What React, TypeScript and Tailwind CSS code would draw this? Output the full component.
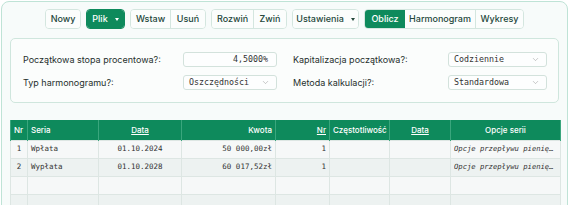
import { ChevronDown } from 'lucide-react';

const sans = { fontFamily: 'Inter, "Noto Sans", sans-serif' };
const mono = { fontFamily: '"DejaVu Sans Mono", "Liberation Mono", monospace' };

function Btn({ children, active, className = '' }: { children: React.ReactNode; active?: boolean; className?: string }) {
  return (
    <div
      className={`h-full flex items-center justify-center px-[7px] text-[9px] font-medium ${
        active ? 'bg-[#0e8a5c] text-white' : 'bg-[#fbfdfc] text-[#24473b]'
      } ${className}`}
    >
      {children}
    </div>
  );
}

function Caret({ light }: { light?: boolean }) {
  return (
    <span
      className={`ml-[7px] w-0 h-0 border-x-[2.5px] border-x-transparent border-t-[3px] ${
        light ? 'border-t-white' : 'border-t-[#24473b]'
      }`}
    />
  );
}

function Toolbar() {
  return (
    <div className="flex justify-center gap-[5px] h-[20px]" style={sans}>
      <div className="flex rounded-[4px] border border-[#d4e6df] overflow-hidden">
        <Btn className="w-[34px]">Nowy</Btn>
      </div>
      <div className="flex rounded-[4px] border border-[#0e8a5c] overflow-hidden">
        <Btn active className="w-[37px]">
          Plik
          <Caret light />
        </Btn>
      </div>
      <div className="flex rounded-[4px] border border-[#d4e6df] overflow-hidden">
        <Btn className="w-[40px] border-r border-[#d4e6df]">Wstaw</Btn>
        <Btn className="w-[34px]">Usuń</Btn>
      </div>
      <div className="flex rounded-[4px] border border-[#d4e6df] overflow-hidden">
        <Btn className="w-[42px] border-r border-[#d4e6df]">Rozwiń</Btn>
        <Btn className="w-[32px]">Zwiń</Btn>
      </div>
      <div className="flex rounded-[4px] border border-[#d4e6df] overflow-hidden">
        <Btn className="w-[65px]">
          Ustawienia
          <Caret />
        </Btn>
      </div>
      <div className="flex rounded-[4px] border border-[#d4e6df] overflow-hidden">
        <Btn active className="w-[40px]">Oblicz</Btn>
        <Btn className="w-[71px] border-r border-[#d4e6df]">Harmonogram</Btn>
        <Btn className="w-[47px]">Wykresy</Btn>
      </div>
    </div>
  );
}

function Field({ label, children }: { label: string; children: React.ReactNode }) {
  return (
    <div className="flex items-center justify-between h-[15px]">
      <span className="text-[9px] text-[#26302d]" style={sans}>
        {label}
      </span>
      {children}
    </div>
  );
}

function Select({ value, width }: { value: string; width: string }) {
  return (
    <div
      className={`${width} h-[15px] flex items-center justify-between pl-[5px] pr-[6px] rounded-[3px] border border-[#d3e2dc] bg-[#fdfefe] text-[8.3px] text-[#333]`}
      style={mono}
    >
      <span>{value}</span>
      <ChevronDown size={9} strokeWidth={1.2} className="text-[#888]" />
    </div>
  );
}

function Settings() {
  return (
    <div className="mt-[9px] rounded-[5px] border border-[#cfe6dd] bg-[#fbfdfc] pt-[13px] pb-[12px] pl-[12px] pr-[11px] grid grid-cols-2 gap-x-[16px] gap-y-[8px]">
      <Field label="Początkowa stopa procentowa?:">
        <div
          className="w-[94px] h-[15px] flex items-center justify-end pr-[8px] rounded-[3px] border border-[#d3e2dc] bg-[#fdfefe] text-[8.3px] text-[#333]"
          style={mono}
        >
          4,5000%
        </div>
      </Field>
      <Field label="Kapitalizacja początkowa?:">
        <Select value="Codziennie" width="w-[99px]" />
      </Field>
      <Field label="Typ harmonogramu?:">
        <Select value="Oszczędności" width="w-[94px]" />
      </Field>
      <Field label="Metoda kalkulacji?:">
        <Select value="Standardowa" width="w-[99px]" />
      </Field>
    </div>
  );
}

const rows = [
  { nr: '1', seria: 'Wpłata', data: '01.10.2024', kwota: '50 000,00zł', n: '1', opcje: 'Opcje przepływu pienię…' },
  { nr: '2', seria: 'Wypłata', data: '01.10.2028', kwota: '60 017,52zł', n: '1', opcje: 'Opcje przepływu pienię…' },
  null,
  null,
];

function Table() {
  const th = 'h-[20px] px-[3px] text-[8px] font-medium text-white border-x border-[#3aa67d]';
  const td = 'h-[18px] px-[3px] text-[7.5px] text-[#333] border border-[#dde6e3] whitespace-nowrap';
  return (
    <table className="mt-[17px] w-[550px] table-fixed border-collapse" style={sans}>
      <colgroup>
        <col className="w-[17px]" />
        <col className="w-[71px]" />
        <col className="w-[83px]" />
        <col className="w-[94px]" />
        <col className="w-[54px]" />
        <col className="w-[60px]" />
        <col className="w-[61px]" />
        <col className="w-[110px]" />
      </colgroup>
      <thead>
        <tr className="bg-[#0e8a5c]">
          <th className={`${th} text-left`}>Nr</th>
          <th className={`${th} text-left`}>Seria</th>
          <th className={`${th} text-center underline`}>Data</th>
          <th className={`${th} text-right`}>Kwota</th>
          <th className={`${th} text-right underline`}>Nr</th>
          <th className={`${th} text-left`}>Częstotliwość</th>
          <th className={`${th} text-center underline`}>Data</th>
          <th className={`${th} text-center`}>Opcje serii</th>
        </tr>
      </thead>
      <tbody style={mono}>
        {rows.map((r, i) => (
          <tr key={i} className={i % 2 === 0 ? 'bg-[#f6f8f8]' : 'bg-[#edf2f1]'}>
            <td className={`${td} text-center`}>{r?.nr}</td>
            <td className={td}>{r?.seria}</td>
            <td className={`${td} text-center`}>{r?.data}</td>
            <td className={`${td} text-right`}>{r?.kwota}</td>
            <td className={`${td} text-right`}>{r?.n}</td>
            <td className={td}></td>
            <td className={td}></td>
            <td className={`${td} italic`}>
              <div className="text-[7.2px] overflow-hidden">{r?.opcje}</div>
            </td>
          </tr>
        ))}
      </tbody>
    </table>
  );
}

export default function App() {
  return (
    <div className="w-[570px] h-[205px] overflow-hidden bg-white pt-[1px] pl-[1px] pr-[2px]">
      <div className="h-[230px] rounded-[8px] border border-[#bfe3d6] bg-[#f7fbfa] pt-[7px] px-[8px]">
        <Toolbar />
        <Settings />
        <Table />
      </div>
    </div>
  );
}
